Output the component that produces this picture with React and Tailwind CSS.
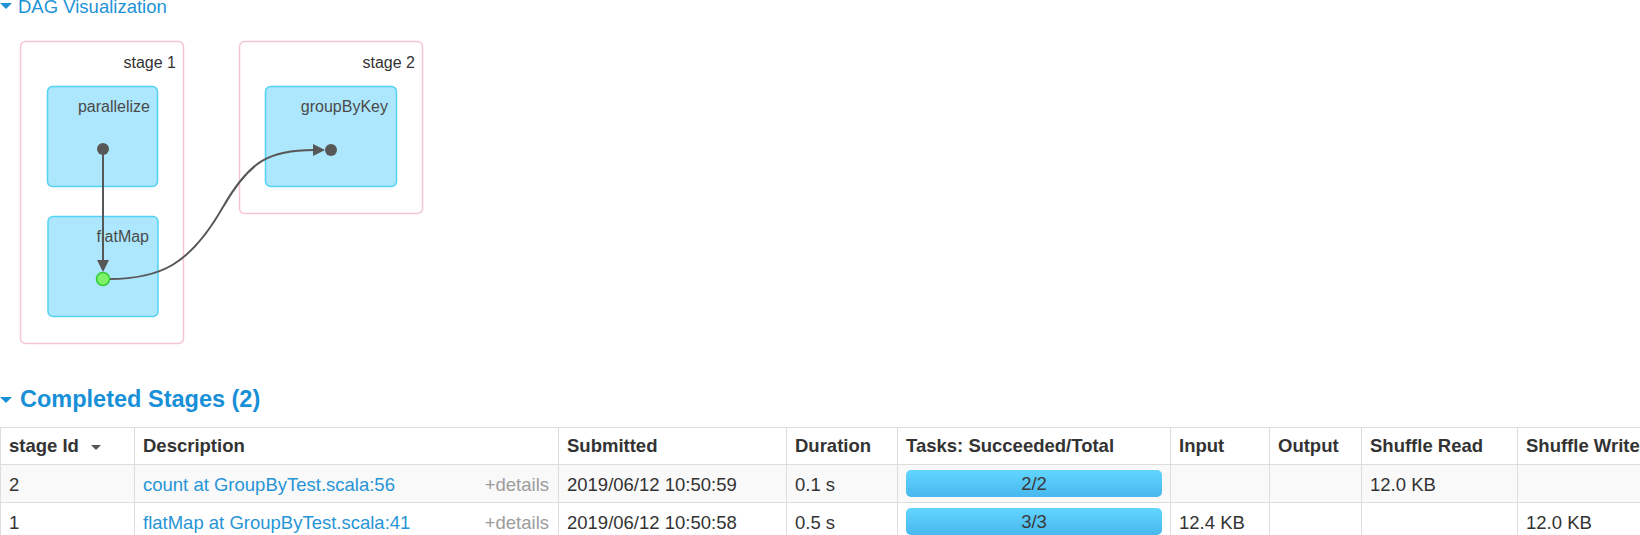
import React from 'react';

// Completed stages shown under the DAG
const stages = [
  {
    id: '2',
    desc: 'count at GroupByTest.scala:56',
    submitted: '2019/06/12 10:50:59',
    duration: '0.1 s',
    tasks: '2/2',
    input: '',
    output: '',
    shuffleRead: '12.0 KB',
    shuffleWrite: '',
  },
  {
    id: '1',
    desc: 'flatMap at GroupByTest.scala:41',
    submitted: '2019/06/12 10:50:58',
    duration: '0.5 s',
    tasks: '3/3',
    input: '12.4 KB',
    output: '',
    shuffleRead: '',
    shuffleWrite: '12.0 KB',
  },
];

const columns = [
  { label: 'stage Id', width: 134, sort: true },
  { label: 'Description', width: 424 },
  { label: 'Submitted', width: 228 },
  { label: 'Duration', width: 111 },
  { label: 'Tasks: Succeeded/Total', width: 273 },
  { label: 'Input', width: 99 },
  { label: 'Output', width: 92 },
  { label: 'Shuffle Read', width: 156 },
  { label: 'Shuffle Write', width: 183 },
];

function Caret({ className }) {
  return (
    <svg width="12" height="6" viewBox="0 0 12 6" className={className}>
      <polygon points="0,0 12,0 6,6" fill="currentColor" />
    </svg>
  );
}

function DagGraph() {
  const edge = '#575757';
  return (
    <svg width="440" height="341" viewBox="0 14 440 341" className="block">
      {/* stage clusters */}
      <rect x="20.5" y="41.5" width="163" height="302" rx="5" fill="#fff" stroke="#f6c5d2" strokeWidth="1.5" />
      <rect x="239.5" y="41.5" width="183" height="172" rx="5" fill="#fff" stroke="#f6c5d2" strokeWidth="1.5" />
      <text x="176" y="68" textAnchor="end" fontSize="16" fill="#333">stage 1</text>
      <text x="415" y="68" textAnchor="end" fontSize="16" fill="#333">stage 2</text>

      {/* rdd nodes */}
      <rect x="47.5" y="86.5" width="110" height="100" rx="5" fill="#ade7fd" stroke="#52d2f4" strokeWidth="1.5" />
      <rect x="48" y="216.5" width="110" height="100" rx="5" fill="#ade7fd" stroke="#52d2f4" strokeWidth="1.5" />
      <rect x="265.5" y="86.5" width="131" height="100" rx="5" fill="#ade7fd" stroke="#52d2f4" strokeWidth="1.5" />
      <text x="150" y="112" textAnchor="end" fontSize="16" fill="#4a4a4a">parallelize</text>
      <text x="149" y="242" textAnchor="end" fontSize="16" fill="#4a4a4a">flatMap</text>
      <text x="388" y="112" textAnchor="end" fontSize="16" fill="#4a4a4a">groupByKey</text>

      {/* edges */}
      <path d="M103 149 V261" stroke={edge} strokeWidth="2" fill="none" />
      <polygon points="97,260 109,260 103,272" fill={edge} />
      <path d="M109 279 C160 279 190 265 223 207 C250 160 270 150 314 150" stroke={edge} strokeWidth="2" fill="none" />
      <polygon points="313,144 325,150 313,156" fill={edge} />

      <circle cx="103" cy="149" r="6" fill={edge} />
      <circle cx="331" cy="150" r="6" fill={edge} />
      <circle cx="103" cy="279" r="6.5" fill="#7ef36a" stroke="#35cc3a" strokeWidth="1.5" />
    </svg>
  );
}

function ProgressBar({ label }) {
  return (
    <div className="h-[27px] w-full rounded-[5px] bg-gradient-to-b from-[#62d5ff] to-[#48b8ee] text-center leading-[27px] text-[#3a3a3a]">
      {label}
    </div>
  );
}

export default function App() {
  return (
    <div className="w-[1640px] overflow-hidden bg-white font-['Liberation_Sans',Arial,sans-serif] text-[#333]">
      {/* DAG section */}
      <div className="flex h-[14px] items-center gap-[6px] text-[18.5px] leading-[14px] text-[#1e92d6]">
        <Caret className="-mt-[2px] shrink-0" />
        <span>DAG Visualization</span>
      </div>
      <DagGraph />

      {/* Completed stages */}
      <div className="mt-[31px] flex h-[26px] items-center gap-[8px] text-[23.5px] font-bold leading-[26px] text-[#1790d8]">
        <Caret className="mt-[2px] shrink-0" />
        <span>Completed Stages (2)</span>
      </div>

      <table className="mt-[15px] w-[1700px] table-fixed border-collapse text-[18.5px]">
        <colgroup>
          {columns.map((c) => (
            <col key={c.label} style={{ width: c.width }} />
          ))}
        </colgroup>
        <thead>
          <tr className="h-[37px]">
            {columns.map((c) => (
              <th key={c.label} className="whitespace-nowrap border border-[#dddddd] px-2 text-left align-middle font-bold text-[#333]">
                {c.sort ? (
                  <span className="flex items-center gap-[12px]">
                    stage Id
                    <svg width="10" height="5" viewBox="0 0 10 5" className="mt-[2px]">
                      <polygon points="0,0 10,0 5,5" fill="#555" />
                    </svg>
                  </span>
                ) : (
                  c.label
                )}
              </th>
            ))}
          </tr>
        </thead>
        <tbody>
          {stages.map((s, i) => (
            <tr key={s.id} className={`h-[38px] ${i % 2 === 0 ? 'bg-[#f9f9f9]' : 'bg-white'}`}>
              <td className="border border-[#dddddd] px-2 pt-[3px] align-middle">{s.id}</td>
              <td className="border border-[#dddddd] px-2 pt-[3px] align-middle">
                <div className="flex items-center justify-between">
                  <span className="text-[#2795d6]">{s.desc}</span>
                  <span className="pr-px text-[#9c9c9c]">+details</span>
                </div>
              </td>
              <td className="border border-[#dddddd] px-2 pt-[3px] align-middle">{s.submitted}</td>
              <td className="border border-[#dddddd] px-2 pt-[3px] align-middle">{s.duration}</td>
              <td className="border border-[#dddddd] px-2 align-middle">
                <ProgressBar label={s.tasks} />
              </td>
              <td className="border border-[#dddddd] px-2 pt-[3px] align-middle">{s.input}</td>
              <td className="border border-[#dddddd] px-2 pt-[3px] align-middle">{s.output}</td>
              <td className="border border-[#dddddd] px-2 pt-[3px] align-middle">{s.shuffleRead}</td>
              <td className="border border-[#dddddd] px-2 pt-[3px] align-middle">{s.shuffleWrite}</td>
            </tr>
          ))}
        </tbody>
      </table>
    </div>
  );
}
